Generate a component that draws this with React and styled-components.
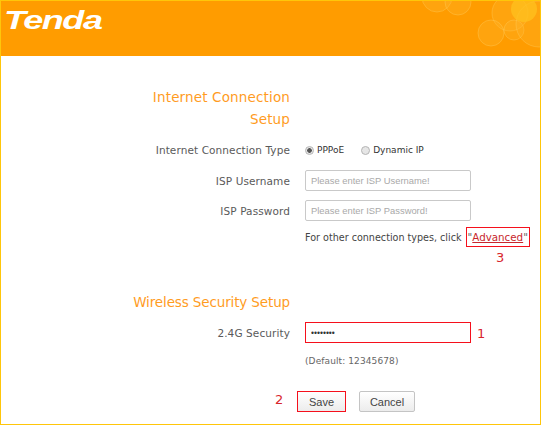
import styled, { createGlobalStyle } from 'styled-components';

const GlobalStyle = createGlobalStyle`
  html, body {
    margin: 0;
    padding: 0;
    background: #fff;
  }
  * {
    box-sizing: border-box;
  }
`;

const Page = styled.div`
  width: 541px;
  height: 425px;
  overflow: hidden;
  border: 1px solid #ffc60a;
  font-family: 'DejaVu Sans', sans-serif;
  color: #555;
  background: #fff;
`;

const Header = styled.header`
  position: relative;
  height: 55px;
  background: #ff9c00;
  overflow: hidden;
`;

const Logo = styled.div`
  display: inline-block;
  margin: 5px 0 0 3px;
  font-family: 'Liberation Sans', sans-serif;
  font-size: 25px;
  font-weight: bold;
  font-style: italic;
  letter-spacing: -1px;
  line-height: 28px;
  color: #fff;
  transform: scaleX(1.44);
  transform-origin: left center;
`;

const Bubbles = styled.svg`
  position: absolute;
  right: 0;
  top: 0;
`;

const Form = styled.main`
  padding-top: 30px;
`;

const Heading = styled.h2`
  width: 289px;
  margin: ${props => props.$top || 0}px 0 0;
  font-size: 13.5px;
  font-weight: normal;
  line-height: 22px;
  letter-spacing: ${props => props.$spacing}px;
  text-align: right;
  color: #ff9c1f;
`;

const Row = styled.div`
  display: grid;
  grid-template-columns: 289px auto;
  column-gap: 15px;
  align-items: center;
  height: ${props => props.$height}px;
  margin-top: ${props => props.$top || 0}px;
`;

const Label = styled.label`
  font-size: 10.5px;
  letter-spacing: 0.1px;
  text-align: right;
  color: #5a5a5a;
`;

const Value = styled.div`
  position: relative;
  display: flex;
  align-items: center;
  font-size: 9.6px;
  white-space: nowrap;
  color: #444;
`;

const RadioMark = styled.span`
  width: 9px;
  height: 9px;
  margin-right: 3px;
  border: 1px solid #b5b5b5;
  border-radius: 50%;
  background: ${props => (props.$checked ? 'radial-gradient(circle, #555 0 2px, #e6e6e6 2.6px)' : '#e6e6e6')};
`;

const RadioText = styled.span`
  margin-right: 17px;
  font-size: 9px;
  color: #333;
`;

const TextInput = styled.input`
  width: 166px;
  height: 21px;
  padding: 0 5px;
  border: 1px solid ${props => (props.$marked ? '#f5101c' : '#c9c9c9')};
  border-radius: ${props => (props.$marked ? '0' : '2px')};
  outline: none;
  background: #fff;
  font-family: 'Liberation Sans', sans-serif;
  font-size: ${props => (props.$marked ? '8.5px' : '9.4px')};
  color: #333;
  &::placeholder {
    color: #a9a9a9;
    opacity: 1;
  }
`;

const AdvancedBox = styled.span`
  margin-left: 4px;
  padding: 0 1px;
  height: 20px;
  line-height: 18px;
  border: 1px solid #f5101c;
  font-size: 10.3px;
  color: #666;
`;

const AdvancedLink = styled.a`
  color: #c8262c;
  text-decoration: underline;
`;

const Note = styled.span`
  font-size: 9px;
  letter-spacing: 0.1px;
  color: #666;
`;

const Number = styled.span`
  position: absolute;
  font-family: 'DejaVu Sans', sans-serif;
  font-size: 13px;
  line-height: 14px;
  color: #d8262c;
  left: ${props => props.$left}px;
  top: ${props => props.$top}px;
`;

const Buttons = styled.div`
  position: relative;
  display: flex;
  gap: 13px;
  margin: 23px 0 0 296px;
`;

const Button = styled.button`
  width: ${props => props.$width}px;
  height: 21px;
  padding: 0;
  border: 1px solid ${props => (props.$marked ? '#f5101c' : '#c4c4c4')};
  border-radius: ${props => (props.$marked ? '0' : '2px')};
  background: linear-gradient(#fff, #ececec);
  font-family: 'Liberation Sans', sans-serif;
  font-size: 11px;
  color: #444;
`;

const App = () => (
  <>
    <GlobalStyle />
    <Page>
      <Header>
        <Logo>Tenda</Logo>
        <Bubbles width="141" height="55" viewBox="0 0 141 55">
          <g fill="#ffb52e" fillOpacity=".3" stroke="#ffd064" strokeOpacity=".35">
            <circle cx="38" cy="-4" r="15" />
            <circle cx="59" cy="1" r="13" />
            <circle cx="111" cy="12" r="18" />
            <circle cx="92" cy="32" r="13" />
            <circle cx="115" cy="29" r="10" />
            <circle cx="140" cy="23" r="23" />
          </g>
          <circle cx="125" cy="8" r="13" fill="#ffc21f" fillOpacity=".75" />
        </Bubbles>
      </Header>
      <Form>
        <Heading $spacing={0.15}>
          Internet Connection
          <br />
          Setup
        </Heading>
        <Row $height={20} $top={10}>
          <Label>Internet Connection Type</Label>
          <Value>
            <RadioMark $checked />
            <RadioText>PPPoE</RadioText>
            <RadioMark />
            <RadioText>Dynamic IP</RadioText>
          </Value>
        </Row>
        <Row $height={21} $top={10}>
          <Label>ISP Username</Label>
          <Value>
            <TextInput placeholder="Please enter ISP Username!" />
          </Value>
        </Row>
        <Row $height={21} $top={9}>
          <Label>ISP Password</Label>
          <Value>
            <TextInput placeholder="Please enter ISP Password!" />
          </Value>
        </Row>
        <Row $height={20} $top={6}>
          <span />
          <Value>
            For other connection types, click
            <AdvancedBox>
              "<AdvancedLink>Advanced</AdvancedLink>"
            </AdvancedBox>
            <Number $left={191} $top={24}>3</Number>
          </Value>
        </Row>
        <Heading $top={44} $spacing={-0.13}>Wireless Security Setup</Heading>
        <Row $height={21} $top={9}>
          <Label>2.4G Security</Label>
          <Value>
            <TextInput $marked type="password" defaultValue="12345678" />
            <Number $left={172} $top={5}>1</Number>
          </Value>
        </Row>
        <Row $height={14} $top={11}>
          <span />
          <Value>
            <Note>(Default: 12345678)</Note>
          </Value>
        </Row>
        <Buttons>
          <Number $left={-22} $top={2}>2</Number>
          <Button $marked $width={49}>Save</Button>
          <Button $width={56}>Cancel</Button>
        </Buttons>
      </Form>
    </Page>
  </>
);

export default App;
